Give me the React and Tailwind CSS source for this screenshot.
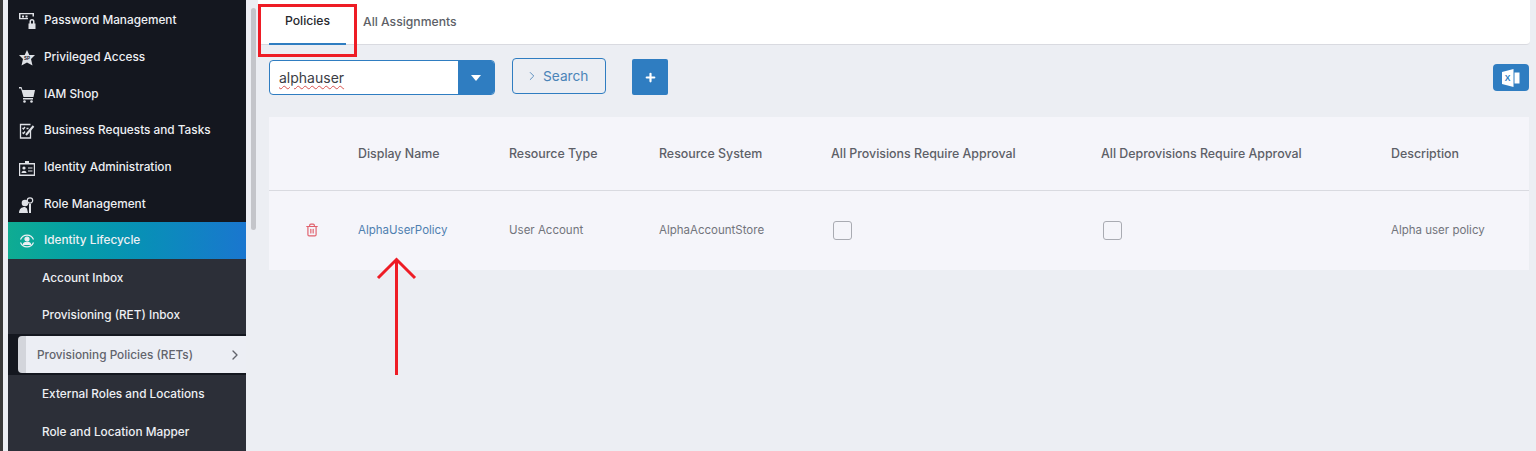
import { ChevronRight, Plus, Trash2 } from 'lucide-react';

const PasswordIcon = () => (
  <svg viewBox="0 0 18 16" className="w-[18px] h-4" fill="currentColor">
    <path fillRule="evenodd" d="M0 0h15v3.500h-1.500V1.200h-12V5H9v1.200H0z" />
    <path d="M3 2.500h2v2H3zM6.500 2.500h2v2h-2z" />
    <path fillRule="evenodd" d="M9.500 10.500h1V8.500a2.500 2.500 0 0 1 5 0v2h1V16h-7zm2.500 0h2v-2a1 1 0 0 0-2 0z" />
  </svg>
);

const StarIcon = () => (
  <svg viewBox="0 0 16 16" className="w-4 h-4" fill="currentColor">
    <path d="M8 0l2.300 5H16l-4 4 1.500 6.500L8 12.500l-5.500 3L4 9 0 5h5.700z" />
    <text x="8" y="10" fontSize="4.500" fontWeight="700" textAnchor="middle" fill="#14171f" fontFamily="'Liberation Sans', sans-serif">SP</text>
  </svg>
);

const CartIcon = () => (
  <svg viewBox="0 0 16 16" className="w-4 h-4" fill="currentColor">
    <path d="M0 0h2.500l1 3H16l-1.500 7h-10L2 1.500H0z" />
    <path d="M4 11h10v1.500H4z" />
    <circle cx="5.500" cy="14.500" r="1.300" />
    <circle cx="12.500" cy="14.500" r="1.300" />
  </svg>
);

const TasksIcon = () => (
  <svg viewBox="0 0 16 16" className="w-4 h-4" fill="none" stroke="currentColor" strokeWidth="1.300">
    <path d="M11.500 6v9h-10V1.500h10" />
    <path d="M3.500 5l1 1 1.500-2M3.500 9.500l1 1 1.500-2M7.500 5.500h2" />
    <path strokeWidth="2" d="M7 12l7.500-9" />
  </svg>
);

const IdCardIcon = () => (
  <svg viewBox="0 0 16 16" className="w-4 h-4" fill="currentColor">
    <path fillRule="evenodd" d="M0 3h6V1h4v2h6v13H0zm1.200 1.500v10h13.600v-10z" />
    <circle cx="5" cy="8" r="1.600" />
    <path d="M2.500 13c0-3 5-3 5 0zM9 7.500h4.500v1H9zM9 10.500h4.500v1H9z" />
  </svg>
);

const RoleIcon = () => (
  <svg viewBox="0 0 16 16" className="w-4 h-4" fill="currentColor">
    <circle cx="6" cy="6" r="3.300" />
    <path d="M0 16c0-4 2.500-6 6-6l2 1.500 1 4.500z" />
    <circle cx="11" cy="3.500" r="2.700" fill="#14171f" stroke="currentColor" strokeWidth="1.200" />
    <path d="M10 7h2v9h-2z" />
  </svg>
);

const LifecycleIcon = () => (
  <svg viewBox="0 0 16 16" className="w-4 h-4" fill="none" stroke="currentColor" strokeWidth="1.200">
    <path d="M1.500 6.500A7 7 0 0 1 14.500 6.500M14.500 9.500A7 7 0 0 1 1.500 9.500" />
    <circle cx="8" cy="6" r="2" fill="currentColor" />
    <path fill="currentColor" d="M4.500 11.500c0-3 7-3 7 0z" />
  </svg>
);

const ExcelIcon = () => (
  <svg viewBox="0 0 18 18" className="w-[18px] h-[18px]">
    <path fill="#fff" d="M0 3L11.500 0v18L0 15z" />
    <path fill="#fff" d="M12.500 3.500H17.500v11h-5z" />
    <text x="5.700" y="12" fontSize="8.500" fontWeight="700" textAnchor="middle" fill="#2f7dc1" fontFamily="'Liberation Sans', sans-serif">X</text>
  </svg>
);

const mainMenu = [
  { label: 'Password Management', icon: <PasswordIcon /> },
  { label: 'Privileged Access', icon: <StarIcon /> },
  { label: 'IAM Shop', icon: <CartIcon /> },
  { label: 'Business Requests and Tasks', icon: <TasksIcon /> },
  { label: 'Identity Administration', icon: <IdCardIcon /> },
  { label: 'Role Management', icon: <RoleIcon /> },
];

const columns = [
  { label: 'Display Name', width: 'w-[151px]' },
  { label: 'Resource Type', width: 'w-[150px]' },
  { label: 'Resource System', width: 'w-[172px]' },
  { label: 'All Provisions Require Approval', width: 'w-[270px]' },
  { label: 'All Deprovisions Require Approval', width: 'w-[290px]' },
  { label: 'Description', width: 'flex-1' },
];

const Sidebar = () => (
  <aside className="w-[238px] shrink-0 bg-[#14171f] text-[11.8px] font-medium text-[#eef0f4] overflow-hidden pt-[2px]">
    {mainMenu.map((item) => (
      <div key={item.label} className="h-[36.67px] pt-[2px] flex items-center">
        <span className="w-[36px] pl-[11px] flex text-[#dfe1e6]">{item.icon}</span>
        <span>{item.label}</span>
      </div>
    ))}
    <div className="h-[37px] pt-[1px] flex items-center bg-gradient-to-r from-[#0fac92] to-[#1a76cf]">
      <span className="w-[36px] pl-[11px] flex"><LifecycleIcon /></span>
      <span>Identity Lifecycle</span>
    </div>
    <div className="bg-[#2c2f38] h-[75px] pl-[34px]">
      <div className="h-[37px] pt-[2px] flex items-center">Account Inbox</div>
      <div className="h-[37px] pt-[2px] flex items-center">Provisioning (RET) Inbox</div>
    </div>
    <div className="h-[41px] pl-[10px] py-[2px]">
      <div className="h-full pt-[2px] flex items-center justify-between bg-[#eceef4] border-l-[8px] border-[#d3d5db] rounded-l text-[#62646c] pl-[11px] pr-[3px]">
        <span>Provisioning Policies (RETs)</span>
        <ChevronRight className="w-4 h-4" />
      </div>
    </div>
    <div className="bg-[#2c2f38] h-[80px] pl-[34px]">
      <div className="h-[37px] pt-[2px] flex items-center">External Roles and Locations</div>
      <div className="h-[39px] pt-[2px] flex items-center">Role and Location Mapper</div>
    </div>
  </aside>
);

const Tabs = () => (
  <div className="h-[45px] ml-[12px] mr-[6px] bg-white rounded-b border-b border-[#d9dae0] flex pl-[11px] text-[12.2px] font-medium">
    <div className="w-[77px] h-[45px] flex items-center justify-center text-[#26282e] border-b-2 border-[#2f7dc1]">Policies</div>
    <div className="ml-[17px] flex items-center text-[#5d5f67]">All Assignments</div>
  </div>
);

const Toolbar = () => (
  <div className="h-[72px] ml-[23px] mr-[7px] flex items-start">
    <div className="mt-[15px] w-[226px] h-[35px] flex rounded border border-[#2f7dc1] bg-white overflow-hidden">
      <div className="flex-1 pl-[9px] flex items-center text-[14px] text-[#3b3d44] underline decoration-wavy decoration-[#d9534f] decoration-1 underline-offset-2">alphauser</div>
      <div className="w-[36px] bg-[#2f7dc1] flex items-center justify-center">
        <div className="w-0 h-0 border-l-[5px] border-r-[5px] border-t-[6px] border-l-transparent border-r-transparent border-t-white" />
      </div>
    </div>
    <button className="mt-[13px] ml-[17px] w-[94px] h-[36px] rounded border border-[#2f7dc1] flex items-center pl-[12px] gap-[4px] text-[13.7px] text-[#4b84b8]">
      <ChevronRight className="w-[14px] h-[14px]" strokeWidth={1.5} />
      Search
    </button>
    <button className="mt-[14px] ml-[26px] w-[36px] h-[36px] rounded-[2px] bg-[#2f7dc1] flex items-center justify-center">
      <Plus className="w-[13px] h-[13px] text-white" strokeWidth={4} />
    </button>
    <button className="mt-[19px] ml-auto w-[36px] h-[27px] rounded bg-[#2f7dc1] flex items-center justify-center">
      <ExcelIcon />
    </button>
  </div>
);

const PolicyTable = () => (
  <div className="ml-[23px] mr-[7px] bg-[#f5f5fa] text-[12.4px]">
    <div className="h-[74px] pt-[2px] flex items-center border-b border-[#d9dae0] font-medium text-[#5d5f67]">
      <div className="w-[89px]" />
      {columns.map((col) => (
        <div key={col.label} className={col.width}>{col.label}</div>
      ))}
    </div>
    <div className="h-[79px] flex items-center text-[#72747c] text-[11.5px]">
      <div className="w-[89px] pl-[36px] flex">
        <Trash2 className="w-[14px] h-[14px] text-[#e0606c] -mt-[2px]" />
      </div>
      <div className="w-[151px] text-[#4f7fb0]">AlphaUserPolicy</div>
      <div className="w-[150px]">User Account</div>
      <div className="w-[172px]">AlphaAccountStore</div>
      <div className="w-[270px]">
        <div className="ml-[2px] w-[19px] h-[19px] rounded-[3px] border border-[#a9abb2] bg-[#f5f5fa]" />
      </div>
      <div className="w-[290px]">
        <div className="ml-[2px] w-[19px] h-[19px] rounded-[3px] border border-[#a9abb2] bg-[#f5f5fa]" />
      </div>
      <div className="flex-1">Alpha user policy</div>
    </div>
  </div>
);

export default function App() {
  return (
    <div className="relative h-[451px] w-[1536px] flex overflow-hidden bg-[#eceef3]" style={{ fontFamily: "Inter, 'Noto Sans', sans-serif" }}>
      <div className="w-[3px] shrink-0 bg-[#3a3a3a]" />
      <div className="w-[5px] shrink-0 bg-[#eceef3]" />
      <Sidebar />
      <main className="flex-1 relative">
        <Tabs />
        <Toolbar />
        <PolicyTable />
        {/* sidebar scrollbar */}
        <div className="absolute left-[5px] top-[8px] w-[5px] h-[222px] rounded bg-[#c4c5ca]" />
      </main>

      {/* red annotations */}
      <div className="absolute left-[258px] top-[4px] w-[99px] h-[53px] border-[3px] border-[#ee1c25]" />
      <svg className="absolute left-[375px] top-[256px]" width="44" height="122" viewBox="0 0 44 122" fill="none" stroke="#ee1c25" strokeWidth="3">
        <path d="M21.500 119V4" />
        <path d="M3 22L21.500 3.500 40 22" />
      </svg>
    </div>
  );
}
